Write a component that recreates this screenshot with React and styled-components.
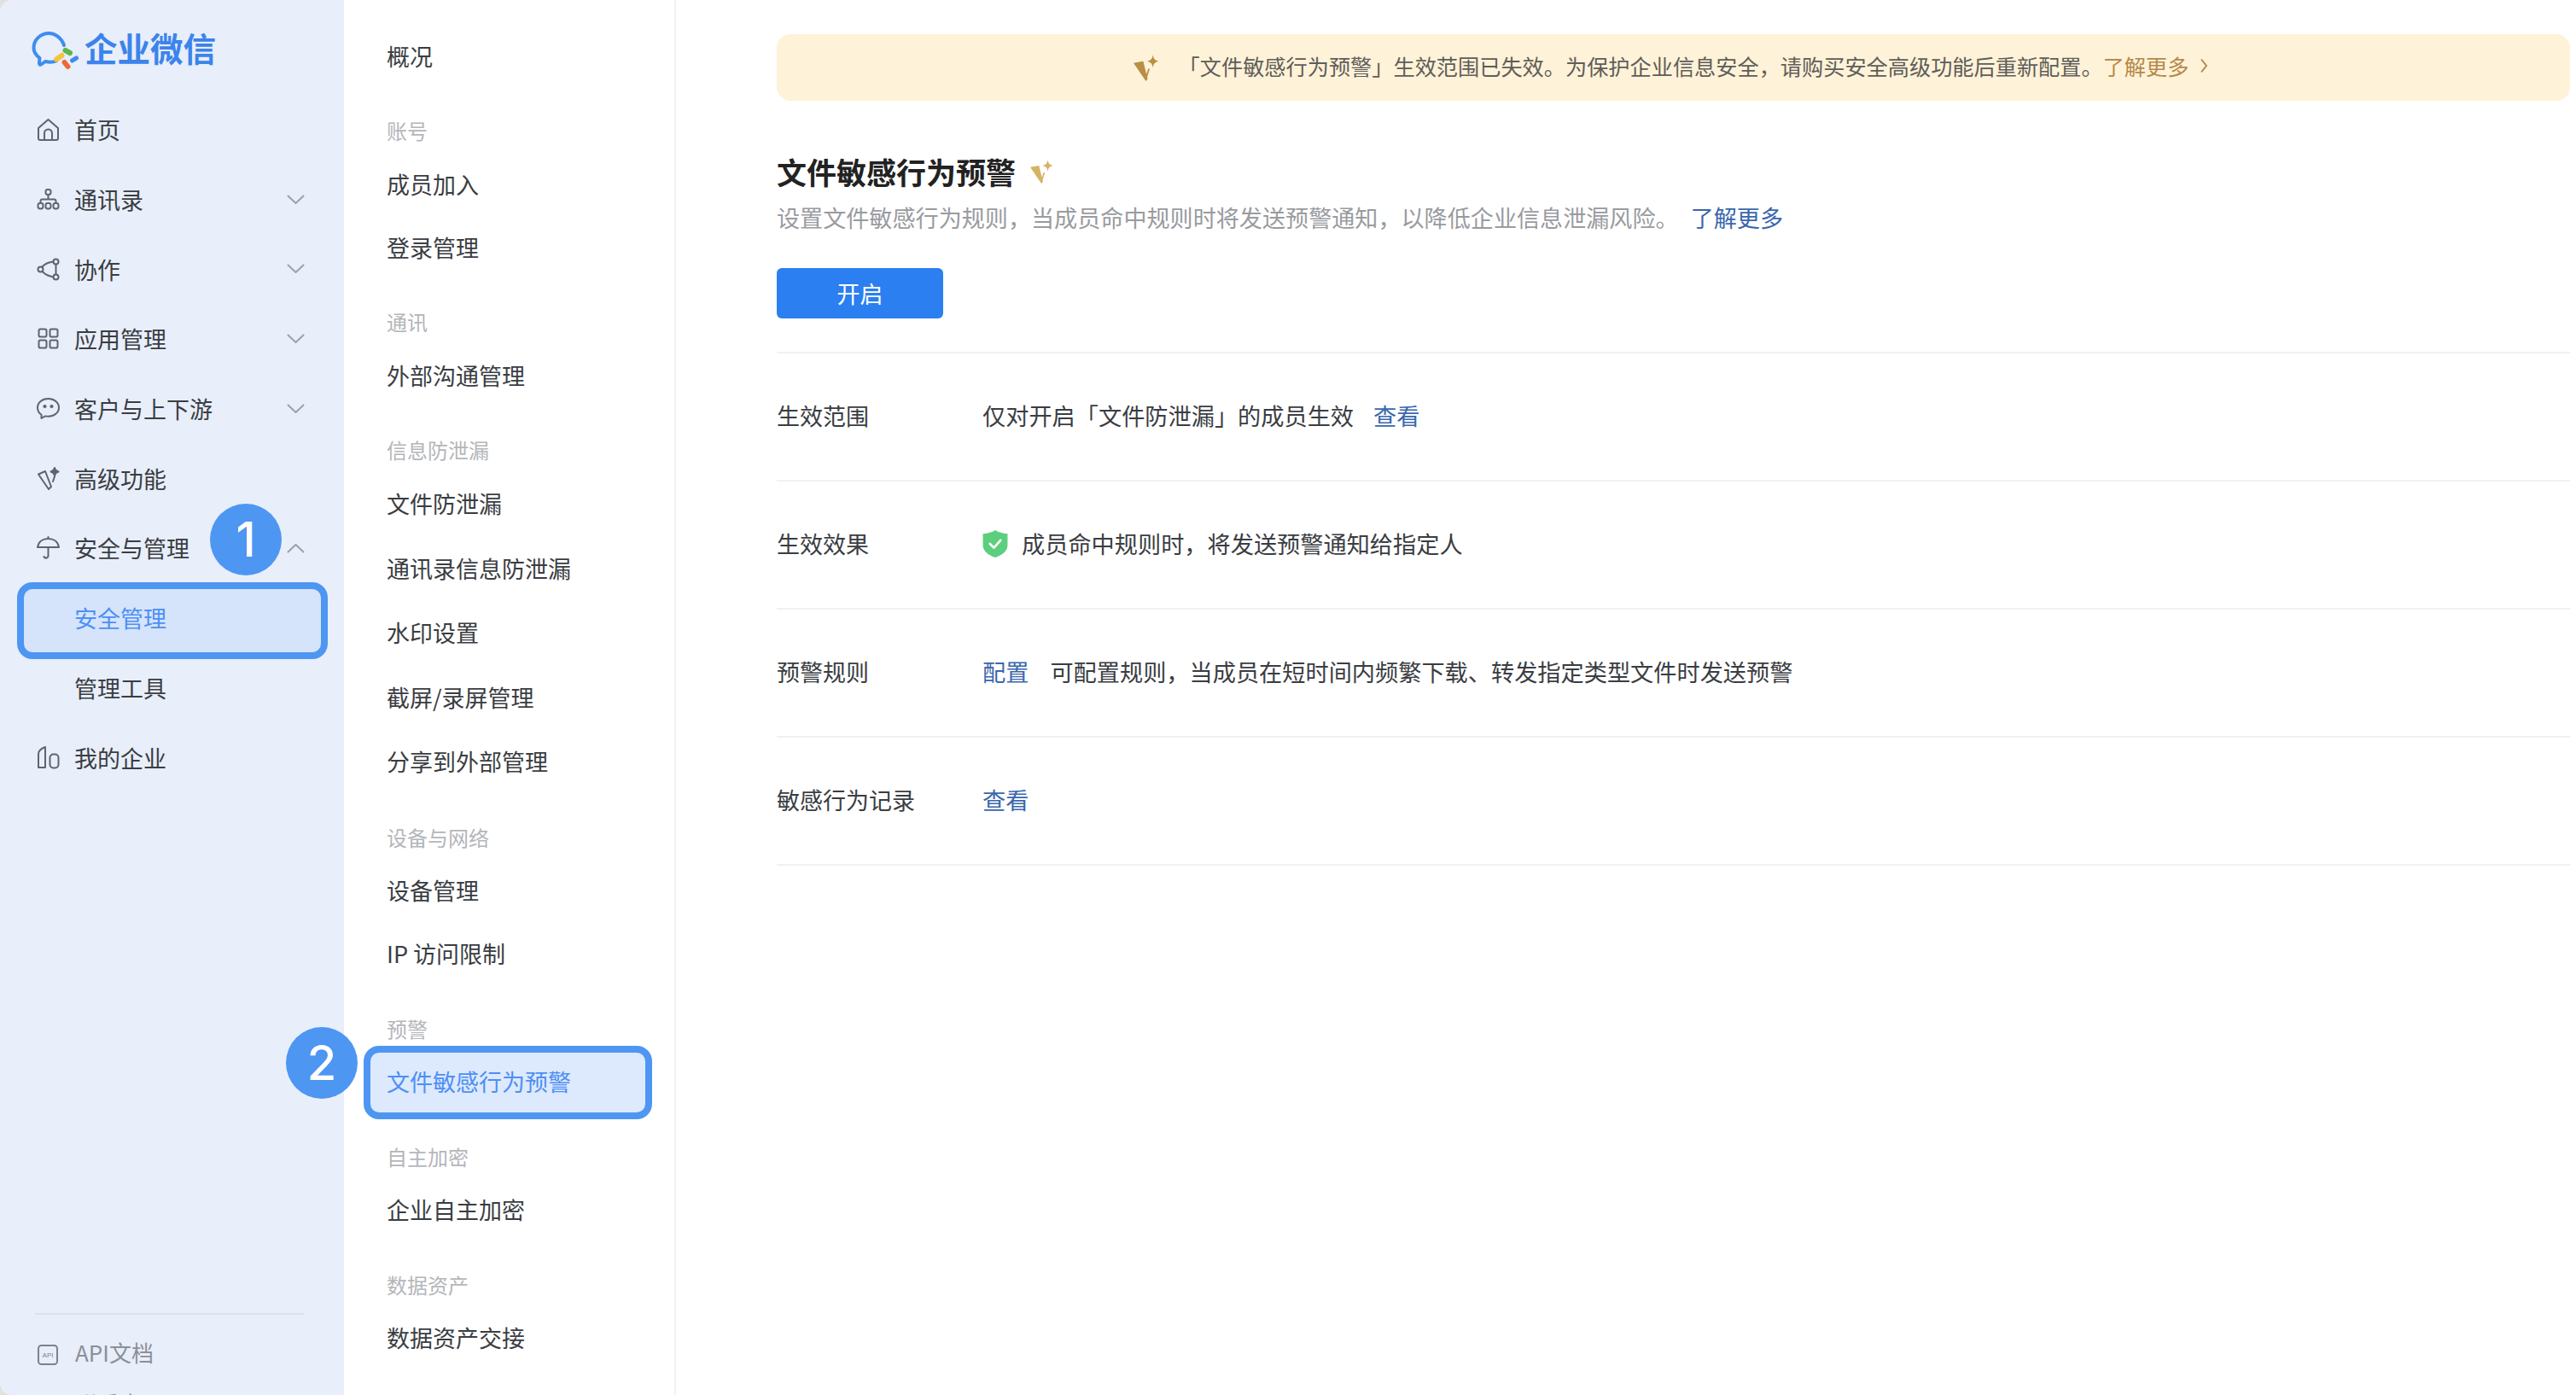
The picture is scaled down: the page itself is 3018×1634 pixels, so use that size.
import React from 'react';
import styled, { createGlobalStyle } from 'styled-components';

const GlobalStyle = createGlobalStyle`
  html, body {
    margin: 0;
    padding: 0;
    background: #fff;
  }
  body {
    font-family: "Noto Sans CJK SC", "Liberation Sans", sans-serif;
    color: #333;
  }
`;

const Page = styled.div`
  display: flex;
  width: 3018px;
  height: 1634px;
  overflow: hidden;
  background: #e2e2dc;
`;

/* left sidebar */
const Sidebar = styled.aside`
  flex: none;
  display: flex;
  flex-direction: column;
  width: 403px;
  height: 1634px;
  overflow: hidden;
  background: #e8eefa;
  border-radius: 14px 0 0 14px;
`;

const Logo = styled.div`
  flex: none;
  display: flex;
  align-items: flex-start;
  gap: 6px;
  height: 111px;
  padding: 36px 0 0 37px;
  box-sizing: border-box;
  span {
    margin-top: -3px;
    font-size: 38.5px;
    line-height: 44px;
    font-weight: 700;
    color: #3b84ec;
  }
`;

const NavList = styled.nav`
  display: flex;
  flex-direction: column;
`;

const NavRow = styled.div`
  position: relative;
  flex: none;
  display: flex;
  align-items: center;
  height: 81.7px;
  padding: 0 46px 0 43px;
  font-size: 27px;
  color: ${p => (p.$active ? '#4e8ff5' : '#3a3d42')};
  ${p =>
    p.$active &&
    `
    &::before {
      content: '';
      position: absolute;
      top: -1px;
      bottom: -7px;
      left: 20px;
      right: 19px;
      box-sizing: border-box;
      border: 8px solid #4d96f2;
      border-radius: 18px;
      background: #d5e4fb;
    }
  `}
`;

const NavIcon = styled.span`
  flex: none;
  display: flex;
  width: 27px;
  height: 27px;
  margin-right: 17px;
  position: relative;
`;

const NavLabel = styled.span`
  position: relative;
  margin-left: ${p => (p.$sub ? '44px' : '0')};
`;

const Chevron = styled.svg`
  flex: none;
  width: 21px;
  height: 12px;
  margin-left: auto;
  transform: ${p => (p.$open ? 'rotate(180deg)' : 'none')};
`;

const Badge = styled.div`
  position: absolute;
  top: ${p => p.$top}px;
  left: ${p => p.$left}px;
  z-index: 3;
  display: flex;
  align-items: center;
  justify-content: center;
  width: 84px;
  height: 84px;
  border-radius: 50%;
  background: #4d96f2;
  color: #fff;
  font-family: Inter, "Liberation Sans", sans-serif;
  font-size: 56px;
  font-weight: 500;
  line-height: 1;
`;

const SideFooter = styled.div`
  margin-top: auto;
  padding: 0 0 0 41px;
  height: 96px;
  flex: none;
`;

const FooterLine = styled.div`
  width: 315px;
  height: 2px;
  background: #dbe2ef;
`;

const FooterRow = styled.div`
  display: flex;
  align-items: center;
  box-sizing: border-box;
  height: ${p => p.$h}px;
  padding-bottom: ${p => p.$pad || 0}px;
  font-size: 26px;
  color: #8b9099;
`;

const FooterIcon = styled.svg`
  flex: none;
  width: 25px;
  height: 25px;
  margin: 8px 19px 0 3px;
`;

const FooterLabel = styled.span`
  margin-left: ${p => (p.$indent ? '47px' : '0')};
`;

/* second column */
const SubNav = styled.nav`
  flex: none;
  box-sizing: border-box;
  width: 389px;
  height: 1634px;
  padding-top: 28px;
  background: #fff;
  border-right: 2px solid #f0f1f3;
`;

const Group = styled.div`
  margin-top: ${p => (p.$first ? '0' : '25px')};
`;

const GroupTitle = styled.div`
  display: flex;
  align-items: center;
  height: 51px;
  padding-left: 50px;
  font-size: 24px;
  color: #b4b6ba;
`;

const SubItem = styled.div`
  position: relative;
  display: flex;
  align-items: center;
  height: ${p => (p.$tall ? 75.5 : 74)}px;
  padding-left: 50px;
  font-size: 27px;
  color: ${p => (p.$active ? '#4e8ff5' : '#3a3d42')};
  span {
    position: relative;
  }
  ${p =>
    p.$active &&
    `
    &::before {
      content: '';
      position: absolute;
      top: -5px;
      bottom: -7px;
      left: 23px;
      width: 338px;
      box-sizing: border-box;
      border: 8px solid #4d96f2;
      border-radius: 18px;
      background: #dde9fc;
    }
  `}
`;

/* main panel */
const Main = styled.main`
  flex: 1;
  min-width: 0;
  box-sizing: border-box;
  height: 1634px;
  padding: 40px 7px 0 118px;
  background: #fff;
`;

const Banner = styled.div`
  display: flex;
  align-items: center;
  justify-content: center;
  box-sizing: border-box;
  height: 78px;
  padding: 0 6px 5px 0;
  border-radius: 16px;
  background: #fef2d8;
  font-size: 25.2px;
  color: #5f5d58;
`;

const BannerLink = styled.a`
  color: #b58a4a;
  margin-right: 13px;
`;

const GoldIcon = styled.svg`
  flex: none;
  width: ${p => p.$size}px;
  height: ${p => p.$size}px;
`;

const BannerIcon = styled.span`
  display: flex;
  margin: 5px 22px 0 0;
`;

const TitleRow = styled.div`
  display: flex;
  align-items: center;
  gap: 17px;
  height: 54px;
  margin-top: 56px;
`;

const Title = styled.h1`
  margin: 0;
  font-size: 35px;
  line-height: 54px;
  font-weight: 700;
  color: #222;
`;

const Desc = styled.p`
  margin: 6px 0 0;
  display: flex;
  gap: 14px;
  height: 40px;
  align-items: center;
  font-size: 27.1px;
  color: #999b9f;
`;

const TextLink = styled.a`
  color: #3a67ad;
`;

const PrimaryButton = styled.button`
  display: block;
  width: 195px;
  height: 59px;
  margin: 40px 0 39px;
  padding: 0;
  border: 0;
  border-radius: 6px;
  background: #2b7ff0;
  color: #fff;
  font-family: inherit;
  font-size: 27px;
`;

const InfoTable = styled.div`
  border-top: 2px solid #f0f1f3;
`;

const InfoRow = styled.div`
  display: flex;
  align-items: center;
  box-sizing: border-box;
  height: 150px;
  padding-bottom: 4px;
  border-bottom: 2px solid #f0f1f3;
  font-size: 27.2px;
  color: #3a3d42;
`;

const InfoLabel = styled.div`
  flex: none;
  width: 241px;
  font-size: 27px;
`;

const InfoValue = styled.div`
  display: flex;
  align-items: center;
  gap: ${p => p.$gap || 23}px;
`;

const ShieldIcon = styled.svg`
  flex: none;
  width: 30px;
  height: 32px;
  margin: 2px -7px 0 0;
`;

const stroke = { fill: 'none', stroke: '#5f656e', strokeWidth: 2, strokeLinecap: 'round', strokeLinejoin: 'round' };

const icons = {
  home: (
    <svg viewBox="0 0 27 27" width="27" height="27" {...stroke}>
      <path d="M2 12 13.5 2 25 12v12a2 2 0 0 1-2 2H4a2 2 0 0 1-2-2z" />
      <path d="M9 26v-8a4.5 4.5 0 0 1 9 0v8" />
    </svg>
  ),
  org: (
    <svg viewBox="0 0 27 27" width="27" height="27" {...stroke}>
      <rect x="10.5" y="2" width="6" height="6" rx="2.4" />
      <path d="M13.5 8v5M4.5 18v-2.5a2 2 0 0 1 2-2h14a2 2 0 0 1 2 2V18" />
      <rect x="1.5" y="18" width="6" height="6.5" rx="2.4" />
      <rect x="10.5" y="18" width="6" height="6.5" rx="2.4" />
      <rect x="19.5" y="18" width="6" height="6.5" rx="2.4" />
    </svg>
  ),
  collab: (
    <svg viewBox="0 0 27 27" width="27" height="27" {...stroke}>
      <circle cx="22.5" cy="4.5" r="3" />
      <circle cx="4.5" cy="13.5" r="3" />
      <circle cx="22.5" cy="22.5" r="3" />
      <path d="M19.5 4.5C14 5 9 7.5 6 11M6.5 16c3 3 7 5.5 13 6.5M22.5 7.5v12" />
    </svg>
  ),
  apps: (
    <svg viewBox="0 0 27 27" width="27" height="27" {...stroke}>
      <rect x="2.5" y="2.5" width="9" height="9" rx="1.8" />
      <rect x="15.5" y="2.5" width="9" height="9" rx="1.8" />
      <rect x="2.5" y="15.5" width="9" height="9" rx="1.8" />
      <rect x="15.5" y="15.5" width="9" height="9" rx="1.8" />
    </svg>
  ),
  chat: (
    <svg viewBox="0 0 27 27" width="27" height="27" {...stroke}>
      <path d="M13.5 2C6.5 2 1 6.5 1 12.5c0 3.5 2 6.5 4.5 8.3V25l4.5-2.6c1 .3 2.3.4 3.5.4 7 0 12.5-4.500 12.5-10.300S20.500 2 13.500 2z" />
      <circle cx="9.5" cy="11" r="1.1" fill="#5f656e" />
      <circle cx="17.5" cy="11" r="1.1" fill="#5f656e" />
    </svg>
  ),
  vip: (
    <svg viewBox="0 0 27 27" width="27" height="27" {...stroke}>
      <path d="M2 8.5 10 5l7 18-3 3z" />
      <path d="M19 17l2-6" />
      <path d="M21 1c.6 3 1.5 3.8 4.5 4.5-3 .7-3.9 1.5-4.5 4.5-.6-3-1.5-3.8-4.5-4.5 3-.7 3.9-1.5 4.5-4.5z" fill="#5f656e" />
    </svg>
  ),
  umbrella: (
    <svg viewBox="0 0 27 27" width="27" height="27" {...stroke}>
      <path d="M1 13C2 6.5 7 3 13.5 3S25 6.5 26 13z" />
      <path d="M13.5 1v2M13.5 13v10a2.6 2.6 0 0 1-5 1" />
    </svg>
  ),
  building: (
    <svg viewBox="0 0 27 27" width="27" height="27" {...stroke}>
      <path d="M2 25V9c0-3 3-6 8-8v24z" />
      <rect x="15.5" y="9.5" width="10" height="16" rx="4" />
    </svg>
  ),
};

const ChevronIcon = ({ open }) => (
  <Chevron viewBox="0 0 21 12" $open={open} fill="none" stroke="#9ba1ab" strokeWidth="2" strokeLinecap="round" strokeLinejoin="round">
    <path d="M1.5 1.5 10.5 10l9-8.5" />
  </Chevron>
);

const LogoMark = () => (
  <svg viewBox="0 0 56 46" width="56" height="46" fill="none" strokeLinecap="round" strokeLinejoin="round" style={{ flex: 'none' }}>
    <path d="M38 17C35 8 27 3 20.5 3 10 3 2.5 11 2.5 20c0 5 3 9 7 12L9 38c0 2 1 2.5 3 1l4-3c4.5 1 9 1 13-.5" stroke="#3f8cf0" strokeWidth="4" />
    <path d="M39.5 23l5.5 3" stroke="#5cb84c" strokeWidth="6" />
    <path d="M29 33.5l6.5-4.5" stroke="#f6c33d" strokeWidth="6" />
    <path d="M47.5 35l5-3" stroke="#3f8cf0" strokeWidth="5" />
    <path d="M38.5 37l4 5" stroke="#ee6a35" strokeWidth="6" />
  </svg>
);

const Gold = ({ size, color }) => (
  <GoldIcon viewBox="0 0 30 30" $size={size}>
    <path d="M0 9.5 11 7.5l5 20-2 2.5z" fill={color} />
    <path d="M15 27l3.5-11h-1.8L14 24z" fill={color} />
    <path d="M22 0c.7 4.5 2 6.5 6.5 7.5-4.5 1-5.8 3-6.5 7.5-.7-4.5-2-6.5-6.5-7.5C20 6.5 21.3 4.5 22 0z" fill={color} />
  </GoldIcon>
);

const navItems = [
  { icon: 'home', label: '首页' },
  { icon: 'org', label: '通讯录', more: true },
  { icon: 'collab', label: '协作', more: true },
  { icon: 'apps', label: '应用管理', more: true },
  { icon: 'chat', label: '客户与上下游', more: true },
  { icon: 'vip', label: '高级功能' },
  { icon: 'umbrella', label: '安全与管理', more: true, open: true, badge: '1' },
  { label: '安全管理', active: true },
  { label: '管理工具' },
  { icon: 'building', label: '我的企业' },
];

const subGroups = [
  { items: ['概况'] },
  { title: '账号', items: ['成员加入', '登录管理'] },
  { title: '通讯', items: ['外部沟通管理'] },
  { title: '信息防泄漏', tall: true, items: ['文件防泄漏', '通讯录信息防泄漏', '水印设置', '截屏/录屏管理', '分享到外部管理'] },
  { title: '设备与网络', items: ['设备管理', 'IP 访问限制'] },
  { title: '预警', items: ['文件敏感行为预警'], active: true },
  { title: '自主加密', items: ['企业自主加密'] },
  { title: '数据资产', items: ['数据资产交接'] },
];

const App = () => (
  <Page>
    <GlobalStyle />
    <Sidebar>
      <Logo>
        <LogoMark />
        <span>企业微信</span>
      </Logo>
      <NavList>
        {navItems.map(item => (
          <NavRow key={item.label} $active={item.active}>
            {item.icon && <NavIcon>{icons[item.icon]}</NavIcon>}
            <NavLabel $sub={!item.icon}>{item.label}</NavLabel>
            {item.more && <ChevronIcon open={item.open} />}
            {item.badge && <Badge $top={-11} $left={246}>{item.badge}</Badge>}
          </NavRow>
        ))}
      </NavList>
      <SideFooter>
        <FooterLine />
        <FooterRow $h={90} $pad={4}>
          <FooterIcon viewBox="0 0 25 25">
            <rect x="1" y="1" width="22" height="22" rx="3.5" fill="none" stroke="#7d838d" strokeWidth="2" />
            <text x="12" y="15" fontSize="8" textAnchor="middle" fill="#7d838d" fontFamily="Liberation Sans">API</text>
          </FooterIcon>
          API文档
        </FooterRow>
        <FooterRow $h={26}>
          <FooterLabel $indent>联系客服</FooterLabel>
        </FooterRow>
      </SideFooter>
    </Sidebar>

    <SubNav>
      {subGroups.map((group, i) => (
        <Group key={group.title || 'top'} $first={i === 0}>
          {group.title && <GroupTitle>{group.title}</GroupTitle>}
          {group.items.map(label => (
            <SubItem key={label} $tall={group.tall} $active={group.active}>
              <span>{label}</span>
              {group.active && <Badge $top={-27} $left={-68}>2</Badge>}
            </SubItem>
          ))}
        </Group>
      ))}
    </SubNav>

    <Main>
      <Banner>
        <BannerIcon><Gold size={31} color="#b88f45" /></BannerIcon>
        「文件敏感行为预警」生效范围已失效。为保护企业信息安全，请购买安全高级功能后重新配置。
        <BannerLink>了解更多</BannerLink>
        <svg viewBox="0 0 10 18" width="10" height="18" fill="none" stroke="#b58a4a" strokeWidth="2">
          <path d="M2 1.5 8 9l-6 7.5" />
        </svg>
      </Banner>

      <TitleRow>
        <Title>文件敏感行为预警</Title>
        <Gold size={28} color="#d6b264" />
      </TitleRow>
      <Desc>
        设置文件敏感行为规则，当成员命中规则时将发送预警通知，以降低企业信息泄漏风险。
        <TextLink>了解更多</TextLink>
      </Desc>
      <PrimaryButton>开启</PrimaryButton>

      <InfoTable>
        <InfoRow>
          <InfoLabel>生效范围</InfoLabel>
          <InfoValue>
            仅对开启「文件防泄漏」的成员生效
            <TextLink>查看</TextLink>
          </InfoValue>
        </InfoRow>
        <InfoRow>
          <InfoLabel>生效效果</InfoLabel>
          <InfoValue>
            <ShieldIcon viewBox="0 0 28 31">
              <path d="M14 0c4 2.5 8 3.5 14 4v13c0 6-5 11-14 14C5 28 0 23 0 17V4c6-.5 10-1.5 14-4z" fill="#5ccf7e" />
              <path d="M8 15.5l4.5 4.5 7.5-8.5" fill="none" stroke="#fff" strokeWidth="2.6" strokeLinecap="round" strokeLinejoin="round" />
            </ShieldIcon>
            成员命中规则时，将发送预警通知给指定人
          </InfoValue>
        </InfoRow>
        <InfoRow>
          <InfoLabel>预警规则</InfoLabel>
          <InfoValue $gap={25}>
            <TextLink>配置</TextLink>
            可配置规则，当成员在短时间内频繁下载、转发指定类型文件时发送预警
          </InfoValue>
        </InfoRow>
        <InfoRow>
          <InfoLabel>敏感行为记录</InfoLabel>
          <InfoValue>
            <TextLink>查看</TextLink>
          </InfoValue>
        </InfoRow>
      </InfoTable>
    </Main>
  </Page>
);

export default App;
